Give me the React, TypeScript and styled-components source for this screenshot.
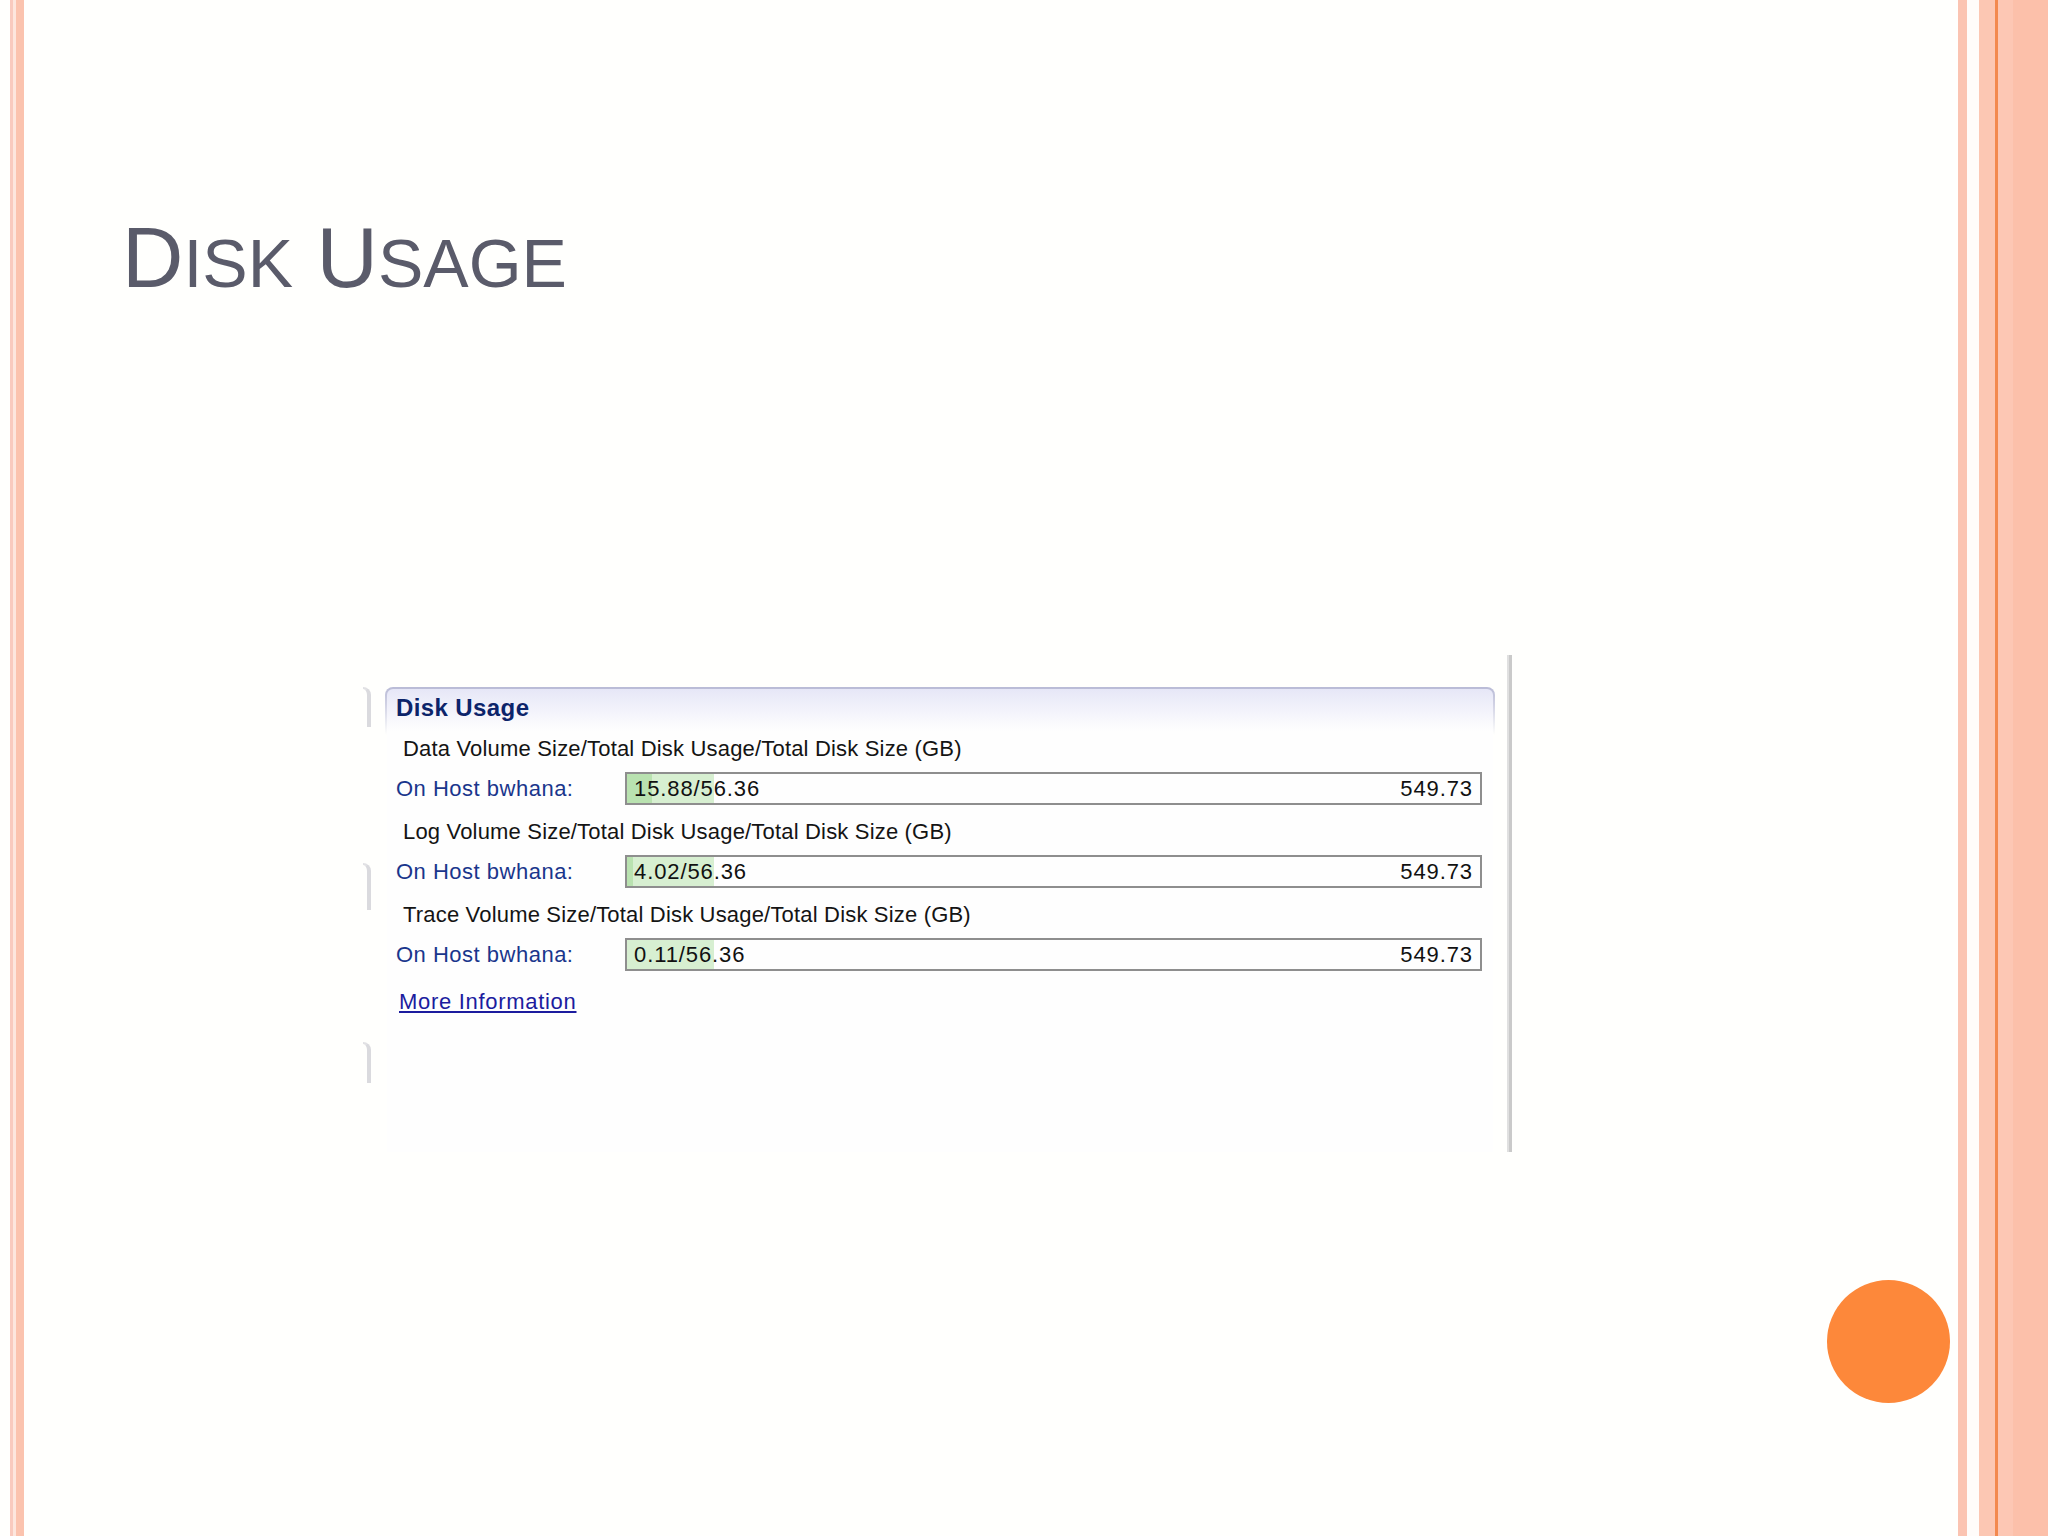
import React from "react";
import styled, { createGlobalStyle } from "styled-components";

const Global = createGlobalStyle`
  html, body {
    margin: 0;
    padding: 0;
    background: #fffffd;
  }
  #root {
    width: 2048px;
    height: 1536px;
  }
`;

const Slide = styled.div`
  display: flex;
  width: 2048px;
  height: 1536px;
  background: #fffffd;
  overflow: hidden;
`;

const Stripe = styled.div<{ $w: number; $c: string }>`
  flex: 0 0 ${(p) => p.$w}px;
  background: ${(p) => p.$c};
`;

const Content = styled.div`
  flex: 1 1 auto;
  display: flex;
  flex-direction: column;
  min-width: 0;
`;

const Title = styled.h1`
  margin: 216px 0 0 0;
  padding-left: 98px;
  height: 84px;
  font-family: "Liberation Sans", Arial, sans-serif;
  font-weight: normal;
  font-size: 85px;
  line-height: 84px;
  color: #5a5b6a;
  white-space: nowrap;
`;

const Small = styled.span`
  font-size: 68px;
  text-transform: uppercase;
`;

const Shot = styled.div`
  display: flex;
  margin: 355px 0 0 338px;
  height: 497px;
  font-family: "Liberation Sans", Arial, sans-serif;
`;

const Gutter = styled.div`
  flex: 0 0 23px;
  display: flex;
  flex-direction: column;
`;

const Bracket = styled.div<{ $h: number; $mt: number }>`
  margin-top: ${(p) => p.$mt}px;
  margin-left: 1px;
  width: 8px;
  height: ${(p) => p.$h}px;
  border-top: 2px solid #dcdce0;
  border-right: 4px solid #d4d4d9;
  border-top-right-radius: 8px;
  box-sizing: border-box;
  opacity: 0.85;
`;

const PanelFrame = styled.div`
  flex: 0 0 1110px;
  margin-top: 32px;
  padding: 2px 2px 0 2px;
  box-sizing: border-box;
  border-radius: 8px 8px 0 0;
  background: linear-gradient(to bottom, #b9bbd6 0px, #d4d5e6 20px, rgba(255, 255, 255, 0) 48px);
  display: flex;
`;

const Panel = styled.div`
  flex: 1 1 auto;
  border-radius: 6px 6px 0 0;
  background: linear-gradient(to bottom, #e6e7f7 0px, #f3f3fb 22px, #fefefe 42px);
  padding: 4px 11px 0 9px;
  display: flex;
  flex-direction: column;
`;

const PanelTitle = styled.div`
  font-weight: bold;
  font-size: 24px;
  line-height: 30px;
  letter-spacing: 0.4px;
  color: #0c246a;
`;

const Caption = styled.div<{ $mt: number }>`
  margin: ${(p) => p.$mt}px 0 0 7px;
  font-size: 22px;
  line-height: 26px;
  letter-spacing: 0.18px;
  color: #141414;
  white-space: nowrap;
`;

const HostRow = styled.div`
  display: grid;
  grid-template-columns: 229px 857px;
  align-items: center;
  height: 33px;
  margin-top: 10px;
`;

const HostLabel = styled.div`
  font-size: 22px;
  line-height: 26px;
  letter-spacing: 0.5px;
  color: #1a368c;
  white-space: nowrap;
`;

const Bar = styled.div`
  height: 33px;
  box-sizing: border-box;
  border: 2px solid #8e8e8e;
  display: flex;
  align-items: center;
  justify-content: space-between;
  padding: 0 7px;
  font-size: 22px;
  line-height: 26px;
  letter-spacing: 0.9px;
  color: #111;
  background-color: #fefefe;
`;

const MoreLink = styled.a`
  margin: 18px 0 0 3px;
  align-self: flex-start;
  font-size: 22px;
  line-height: 26px;
  letter-spacing: 0.7px;
  color: #1c1c9e;
  text-decoration: underline;
  text-underline-offset: 2px;
  cursor: pointer;
`;

const VLine = styled.div`
  flex: 0 0 3px;
  margin-left: 12px;
  border-left: 2px solid #e0e0e0;
  background: #cacaca;
`;

const Footer = styled.div`
  display: flex;
  justify-content: flex-end;
  margin-top: 128px;
  padding-right: 8px;
`;

const Dot = styled.div`
  width: 123px;
  height: 123px;
  border-radius: 50%;
  background: #fd883a;
`;

type Row = { caption: string; used: number; total: number; size: number };

const rows: Row[] = [
  { caption: "Data Volume Size/Total Disk Usage/Total Disk Size (GB)", used: 15.88, total: 56.36, size: 549.73 },
  { caption: "Log Volume Size/Total Disk Usage/Total Disk Size (GB)", used: 4.02, total: 56.36, size: 549.73 },
  { caption: "Trace Volume Size/Total Disk Usage/Total Disk Size (GB)", used: 0.11, total: 56.36, size: 549.73 },
];

const fmt = (n: number) => n.toFixed(2);

export default function App() {
  return (
    <>
      <Global />
      <Slide>
        <Stripe $w={10} $c="#fffffd" />
        <Stripe $w={3} $c="#f9cabe" />
        <Stripe $w={3} $c="#fde6dd" />
        <Stripe $w={8} $c="#fbc3ae" />
        <Content>
          <Title>
            D<Small>isk</Small> U<Small>sage</Small>
          </Title>
          <Shot>
            <Gutter>
              <Bracket $h={40} $mt={32} />
              <Bracket $h={47} $mt={136} />
              <Bracket $h={41} $mt={132} />
            </Gutter>
            <PanelFrame>
              <Panel>
                <PanelTitle>Disk Usage</PanelTitle>
                {rows.map((r, i) => {
                  const a = (r.used / r.size) * 100;
                  const b = (r.total / r.size) * 100;
                  return (
                    <React.Fragment key={r.caption}>
                      <Caption $mt={i === 0 ? 13 : 14}>{r.caption}</Caption>
                      <HostRow>
                        <HostLabel>On Host bwhana:</HostLabel>
                        <Bar
                          style={{
                            backgroundImage: `linear-gradient(to right, #b9e2b0 0%, #b9e2b0 ${a}%, #d7efd1 ${a}%, #d7efd1 ${b}%, #fefefe ${b}%)`,
                          }}
                        >
                          <span>
                            {fmt(r.used)}/{fmt(r.total)}
                          </span>
                          <span>{fmt(r.size)}</span>
                        </Bar>
                      </HostRow>
                    </React.Fragment>
                  );
                })}
                <MoreLink>More Information</MoreLink>
              </Panel>
            </PanelFrame>
            <VLine />
          </Shot>
          <Footer>
            <Dot />
          </Footer>
        </Content>
        <Stripe $w={9} $c="#fbc4b2" />
        <Stripe $w={12} $c="#fffcfa" />
        <Stripe $w={16} $c="#fcc7b3" />
        <Stripe $w={3} $c="#f3894e" />
        <Stripe $w={15} $c="#fdc7b4" />
        <Stripe $w={35} $c="#fcc0aa" />
      </Slide>
    </>
  );
}
